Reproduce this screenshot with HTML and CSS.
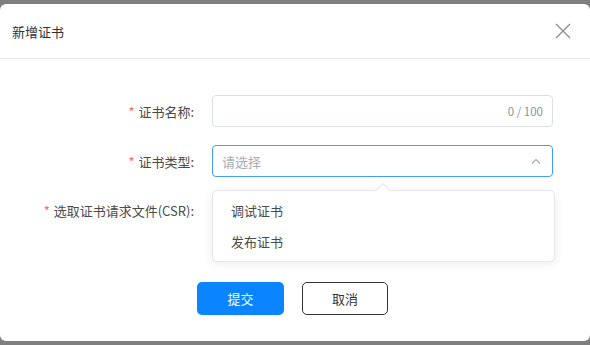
FILE: index.html
```html
<!DOCTYPE html>
<html lang="zh">
<head>
<meta charset="utf-8">
<link rel="stylesheet" href="styles.css">
</head>
<body>
<div class="dialog">
  <div class="header">
    <span class="title">新增证书</span>
    <svg class="close" width="16" height="16" viewBox="0 0 16 16"><path d="M1 1L15 15M15 1L1 15" stroke="#8c8c8c" stroke-width="1.3" fill="none"/></svg>
  </div>
  <div class="form">
    <div class="row">
      <div class="label"><span class="req">*</span> 证书名称:</div>
      <div class="input"><span class="count">0 / 100</span></div>
    </div>
    <div class="row">
      <div class="label"><span class="req">*</span> 证书类型:</div>
      <div class="input select">
        <span class="placeholder">请选择</span>
        <svg class="chev" width="10" height="6" viewBox="0 0 10 6"><path d="M1 5.5L5 1.5L9 5.5" stroke="#a8abb2" stroke-width="1.1" fill="none"/></svg>
        <div class="dropdown">
          <div class="arrow"></div>
          <div class="item">调试证书</div>
          <div class="item">发布证书</div>
        </div>
      </div>
    </div>
    <div class="row">
      <div class="label"><span class="req">*</span> 选取证书请求文件(CSR):</div>
      <div class="field"></div>
    </div>
    <div class="buttons">
      <button class="btn primary">提交</button>
      <button class="btn plain">取消</button>
    </div>
  </div>
</div>
</body>
</html>
```
FILE: styles.css
```css
* { box-sizing: border-box; }
html, body { margin: 0; padding: 0; }
body {
  background: #7f7f7f;
  width: 590px;
  height: 345px;
  overflow: hidden;
  padding-top: 4px;
  font-family: "Noto Sans CJK SC", "Noto Sans", sans-serif;
}
.dialog {
  width: 590px;
  height: 337px;
  background: #fff;
  border-radius: 6px;
}
.header {
  height: 55px;
  border-bottom: 1px solid #e8e8e8;
  display: flex;
  align-items: center;
  justify-content: space-between;
  padding: 0 19px 0 12px;
}
.title { font-size: 13px; color: #303133; }
.close { display: block; }
.form {
  padding-top: 36px;
  display: flex;
  flex-direction: column;
}
.row {
  display: flex;
  align-items: center;
  height: 32px;
  margin-bottom: 18px;
}
.row:nth-child(2) { margin-bottom: 17px; }
.row:nth-child(3) { margin-bottom: 56px; }
.label {
  width: 194px;
  text-align: right;
  font-size: 13px;
  color: #4a4a4a;
  margin-right: 18px;
  white-space: nowrap;
}
.req { color: #f56c6c; margin-right: 1px; }
.input {
  position: relative;
  width: 341px;
  height: 32px;
  border: 1px solid #dcdfe6;
  border-radius: 4px;
  display: flex;
  align-items: center;
  justify-content: flex-end;
  padding: 0 9px;
}
.count { font-size: 11.5px; color: #909399; }
.select {
  border-color: #409eff;
  justify-content: space-between;
}
.placeholder { font-size: 13px; color: #a8abb2; }
.chev { margin-right: 2px; }
.dropdown {
  position: absolute;
  left: -1px;
  top: 44px;
  width: 343px;
  height: 72px;
  background: #fff;
  border: 1px solid #e4e7ed;
  border-radius: 5px;
  box-shadow: 0 2px 10px rgba(0,0,0,0.08);
  padding-top: 4px;
  z-index: 2;
}
.arrow {
  position: absolute;
  top: -6px;
  left: 165px;
  width: 10px;
  height: 10px;
  background: #fff;
  border-left: 1px solid #e4e7ed;
  border-top: 1px solid #e4e7ed;
  transform: rotate(45deg);
}
.item {
  height: 31px;
  line-height: 31px;
  font-size: 13px;
  color: #4a4a4a;
  padding-left: 18px;
}
.field { width: 341px; height: 32px; }
.buttons {
  display: flex;
  gap: 18px;
  padding-left: 197px;
}
.btn {
  width: 87px;
  height: 33px;
  font-family: inherit;
  font-size: 13px;
  border-radius: 5px;
  cursor: pointer;
}
.primary {
  background: #0a84ff;
  border: none;
  color: #fff;
}
.plain {
  background: #fff;
  border: 1px solid #333;
  color: #333;
  width: 86px;
}
```
